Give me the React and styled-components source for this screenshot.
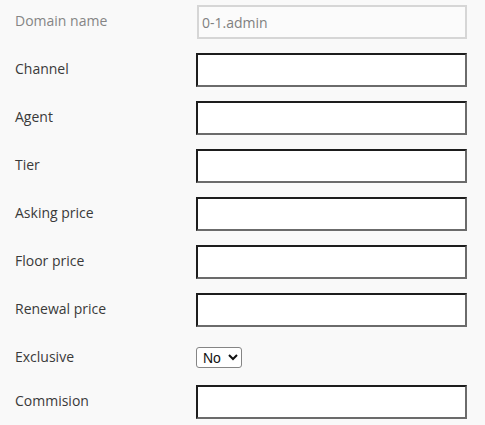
import React from "react";
import styled, { createGlobalStyle } from "styled-components";

const Global = createGlobalStyle`
  html, body { margin: 0; padding: 0; background: #f9f9f9; }
  body { font-family: "Open Sans", "Noto Sans", sans-serif; }
`;

const Form = styled.div`
  display: grid;
  grid-template-columns: 181px 271px;
  align-items: center;
  padding: 5px 0 0 15px;
  row-gap: 14px;
`;

const Label = styled.label`
  font-size: 14px;
  margin-bottom: ${(p) => (p.$tight ? "0" : "3px")};
  color: ${(p) => (p.$muted ? "#858585" : "#3a3a3a")};
`;

const Input = styled.input`
  box-sizing: border-box;
  width: 271px;
  height: 34px;
  margin: 0;
  padding: 0 3px;
  font-family: "Open Sans", sans-serif;
  font-size: 14px;
  background: #fff;
  border: 2px solid;
  border-color: #1d1d1d #6b6b6b #6b6b6b #1d1d1d;
  outline: none;
`;

const ReadOnlyInput = styled(Input)`
  width: 270px;
  height: 34px;
  background: #fbfbfb;
  border: 2px solid #d6d6d6;
  color: #808080;
  margin-left: 1px;
`;

const SelectCell = styled.div`
  box-sizing: border-box;
  height: 30px;
  padding-top: 6px;
  display: flex;
  align-items: flex-start;
`;

const Select = styled.select`
  box-sizing: border-box;
  font-family: "Liberation Sans", Arial, sans-serif;
  font-size: 14px;
  height: 21px;
  width: 46px;
  color: #111;
  background: #fff;
  border: 1px solid #858585;
  border-radius: 3px;
  padding: 0 0 0 2px;
  margin: 0;
`;

const fields = ["Channel", "Agent", "Tier", "Asking price", "Floor price", "Renewal price"];

export default function App() {
  return (
    <>
      <Global />
      <Form>
        <Label $muted>Domain name</Label>
        <ReadOnlyInput readOnly value="0-1.admin" />
        {fields.map((f) => (
          <React.Fragment key={f}>
            <Label>{f}</Label>
            <Input />
          </React.Fragment>
        ))}
        <Label $tight>Exclusive</Label>
        <SelectCell>
          <Select defaultValue="No">
            <option>No</option>
            <option>Yes</option>
          </Select>
        </SelectCell>
        <Label>Commision</Label>
        <Input />
      </Form>
    </>
  );
}
